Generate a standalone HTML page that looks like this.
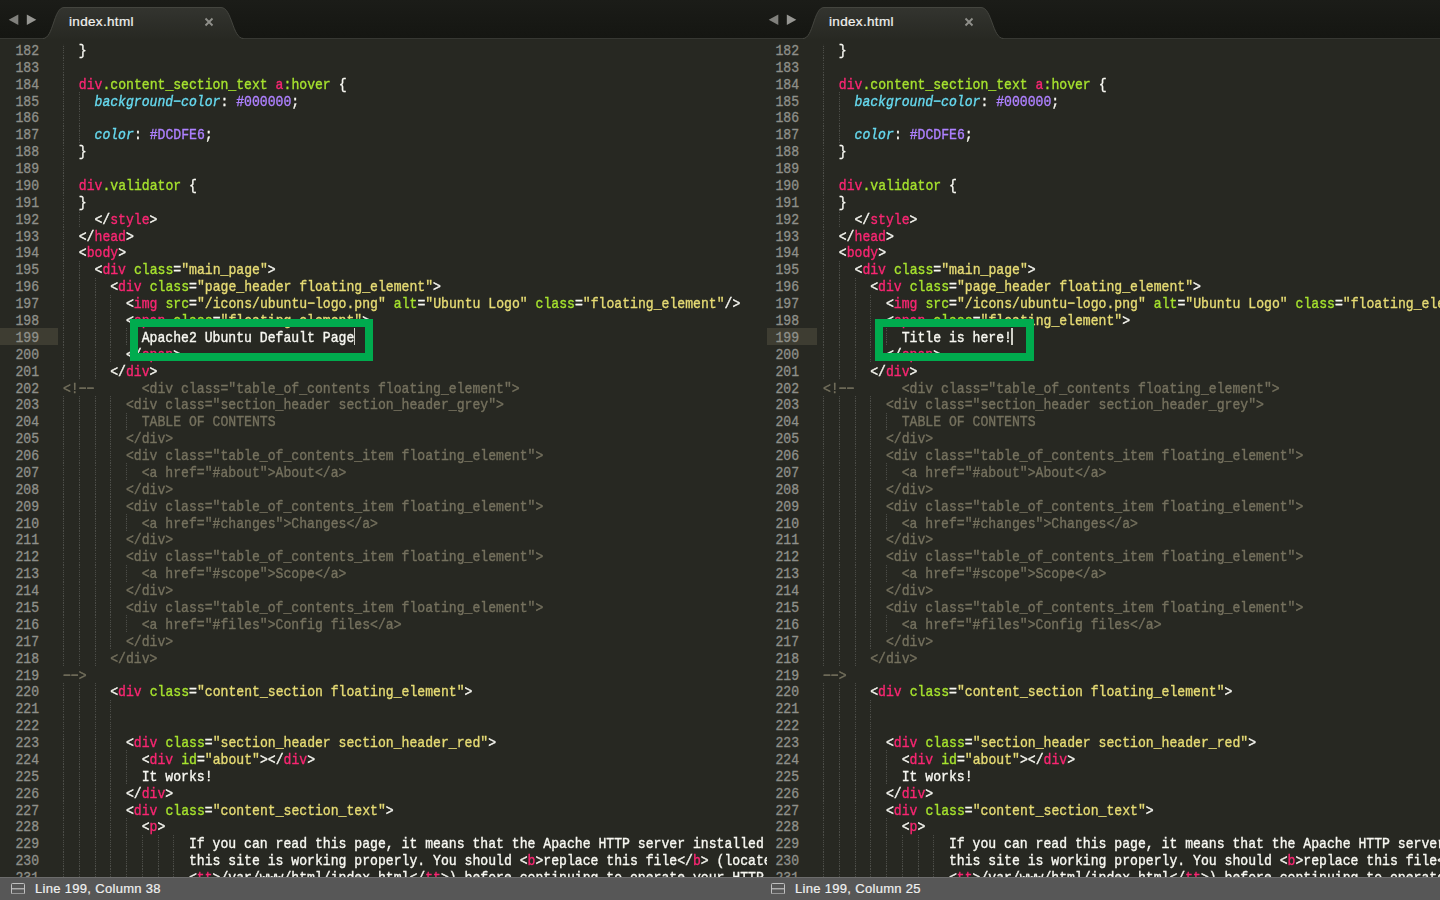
<!DOCTYPE html>
<html><head><meta charset="utf-8"><title>index.html</title>
<style>

*{box-sizing:border-box;margin:0;padding:0}
html,body{width:1440px;height:900px;overflow:hidden;background:#272822}
body{position:relative;font-family:"Liberation Mono",monospace;color:#f8f8f2}
.pane{position:absolute;top:0;height:877px;overflow:hidden;background:#272822}
.guthl{position:absolute;background:#3e3d32}
.gd{position:absolute;width:1px;height:16.883px;background:repeating-linear-gradient(to bottom,rgba(255,255,255,.17) 0 1.1px,rgba(255,255,255,.02) 1.1px 2.25px)}
.gw{position:absolute;left:0;top:44px;width:100%;height:833px;overflow:hidden}
.nums{position:absolute;top:0;width:39.0px;transform-origin:100% 0}
.ln{position:absolute;right:0;height:16.883px;line-height:16.883px;font-size:15.00px;color:#8f908a;white-space:pre;-webkit-text-stroke:.32px currentColor;transform:scaleX(0.8747);transform-origin:100% 0}
.code{position:absolute;top:0;width:2000px;transform:scaleX(0.8747);transform-origin:0 0}
.l{position:absolute;left:0;height:16.883px;line-height:16.883px;font-size:15.00px;white-space:pre;color:#f8f8f2;-webkit-text-stroke:.38px currentColor}
.p{color:#f92672}.g{color:#a6e22e}.y{color:#e6db74}.b{color:#66d9ef;font-style:italic}.v{color:#ae81ff}.c{color:#75715e}
.box{position:absolute;border:8px solid #00ab4e}
.caret{position:absolute;width:1.4px;background:#d0d0c8}
#tabs{position:absolute;left:0;top:0;width:1440px;height:40px}
.tabtxt{position:absolute;top:13px;font:13.5px/18px "Liberation Sans",sans-serif;color:#f2f2f0;letter-spacing:.33px;-webkit-text-stroke:.2px currentColor}
#status{position:absolute;left:0;top:877px;width:1440px;height:23px;background:#575757;border-top:1px solid #6c6c6c}
.sttxt{position:absolute;top:2.6px;font:13px/16px "Liberation Sans",sans-serif;color:#f0f0f0;letter-spacing:.31px;-webkit-text-stroke:.2px currentColor}
.sticon{position:absolute;top:5px;width:14px;height:11.4px}

</style></head><body>
<div class="pane" style="left:0px;width:767px">
<div class="guthl" style="left:0.0px;width:57.5px;top:328.31px;height:16.88px"></div>
<div class="gw">
<i class="gd" style="left:63.05px;top:-2.70px"></i>
<i class="gd" style="left:63.05px;top:14.18px"></i>
<i class="gd" style="left:63.05px;top:31.07px"></i>
<i class="gd" style="left:63.05px;top:47.95px"></i>
<i class="gd" style="left:78.79px;top:47.95px"></i>
<i class="gd" style="left:63.05px;top:64.83px"></i>
<i class="gd" style="left:78.79px;top:64.83px"></i>
<i class="gd" style="left:63.05px;top:81.71px"></i>
<i class="gd" style="left:78.79px;top:81.71px"></i>
<i class="gd" style="left:63.05px;top:98.60px"></i>
<i class="gd" style="left:63.05px;top:115.48px"></i>
<i class="gd" style="left:63.05px;top:132.36px"></i>
<i class="gd" style="left:63.05px;top:149.25px"></i>
<i class="gd" style="left:63.05px;top:166.13px"></i>
<i class="gd" style="left:78.79px;top:166.13px"></i>
<i class="gd" style="left:63.05px;top:183.01px"></i>
<i class="gd" style="left:63.05px;top:199.90px"></i>
<i class="gd" style="left:63.05px;top:216.78px"></i>
<i class="gd" style="left:78.79px;top:216.78px"></i>
<i class="gd" style="left:63.05px;top:233.66px"></i>
<i class="gd" style="left:78.79px;top:233.66px"></i>
<i class="gd" style="left:94.54px;top:233.66px"></i>
<i class="gd" style="left:63.05px;top:250.54px"></i>
<i class="gd" style="left:78.79px;top:250.54px"></i>
<i class="gd" style="left:94.54px;top:250.54px"></i>
<i class="gd" style="left:110.28px;top:250.54px"></i>
<i class="gd" style="left:63.05px;top:267.43px"></i>
<i class="gd" style="left:78.79px;top:267.43px"></i>
<i class="gd" style="left:94.54px;top:267.43px"></i>
<i class="gd" style="left:110.28px;top:267.43px"></i>
<i class="gd" style="left:63.05px;top:284.31px"></i>
<i class="gd" style="left:78.79px;top:284.31px"></i>
<i class="gd" style="left:94.54px;top:284.31px"></i>
<i class="gd" style="left:110.28px;top:284.31px"></i>
<i class="gd" style="left:126.03px;top:284.31px"></i>
<i class="gd" style="left:63.05px;top:301.19px"></i>
<i class="gd" style="left:78.79px;top:301.19px"></i>
<i class="gd" style="left:94.54px;top:301.19px"></i>
<i class="gd" style="left:110.28px;top:301.19px"></i>
<i class="gd" style="left:63.05px;top:318.08px"></i>
<i class="gd" style="left:78.79px;top:318.08px"></i>
<i class="gd" style="left:94.54px;top:318.08px"></i>
<i class="gd" style="left:63.05px;top:351.84px"></i>
<i class="gd" style="left:78.79px;top:351.84px"></i>
<i class="gd" style="left:94.54px;top:351.84px"></i>
<i class="gd" style="left:110.28px;top:351.84px"></i>
<i class="gd" style="left:63.05px;top:368.73px"></i>
<i class="gd" style="left:78.79px;top:368.73px"></i>
<i class="gd" style="left:94.54px;top:368.73px"></i>
<i class="gd" style="left:110.28px;top:368.73px"></i>
<i class="gd" style="left:126.03px;top:368.73px"></i>
<i class="gd" style="left:63.05px;top:385.61px"></i>
<i class="gd" style="left:78.79px;top:385.61px"></i>
<i class="gd" style="left:94.54px;top:385.61px"></i>
<i class="gd" style="left:110.28px;top:385.61px"></i>
<i class="gd" style="left:63.05px;top:402.49px"></i>
<i class="gd" style="left:78.79px;top:402.49px"></i>
<i class="gd" style="left:94.54px;top:402.49px"></i>
<i class="gd" style="left:110.28px;top:402.49px"></i>
<i class="gd" style="left:63.05px;top:419.38px"></i>
<i class="gd" style="left:78.79px;top:419.38px"></i>
<i class="gd" style="left:94.54px;top:419.38px"></i>
<i class="gd" style="left:110.28px;top:419.38px"></i>
<i class="gd" style="left:126.03px;top:419.38px"></i>
<i class="gd" style="left:63.05px;top:436.26px"></i>
<i class="gd" style="left:78.79px;top:436.26px"></i>
<i class="gd" style="left:94.54px;top:436.26px"></i>
<i class="gd" style="left:110.28px;top:436.26px"></i>
<i class="gd" style="left:63.05px;top:453.14px"></i>
<i class="gd" style="left:78.79px;top:453.14px"></i>
<i class="gd" style="left:94.54px;top:453.14px"></i>
<i class="gd" style="left:110.28px;top:453.14px"></i>
<i class="gd" style="left:63.05px;top:470.02px"></i>
<i class="gd" style="left:78.79px;top:470.02px"></i>
<i class="gd" style="left:94.54px;top:470.02px"></i>
<i class="gd" style="left:110.28px;top:470.02px"></i>
<i class="gd" style="left:126.03px;top:470.02px"></i>
<i class="gd" style="left:63.05px;top:486.91px"></i>
<i class="gd" style="left:78.79px;top:486.91px"></i>
<i class="gd" style="left:94.54px;top:486.91px"></i>
<i class="gd" style="left:110.28px;top:486.91px"></i>
<i class="gd" style="left:63.05px;top:503.79px"></i>
<i class="gd" style="left:78.79px;top:503.79px"></i>
<i class="gd" style="left:94.54px;top:503.79px"></i>
<i class="gd" style="left:110.28px;top:503.79px"></i>
<i class="gd" style="left:63.05px;top:520.67px"></i>
<i class="gd" style="left:78.79px;top:520.67px"></i>
<i class="gd" style="left:94.54px;top:520.67px"></i>
<i class="gd" style="left:110.28px;top:520.67px"></i>
<i class="gd" style="left:126.03px;top:520.67px"></i>
<i class="gd" style="left:63.05px;top:537.56px"></i>
<i class="gd" style="left:78.79px;top:537.56px"></i>
<i class="gd" style="left:94.54px;top:537.56px"></i>
<i class="gd" style="left:110.28px;top:537.56px"></i>
<i class="gd" style="left:63.05px;top:554.44px"></i>
<i class="gd" style="left:78.79px;top:554.44px"></i>
<i class="gd" style="left:94.54px;top:554.44px"></i>
<i class="gd" style="left:110.28px;top:554.44px"></i>
<i class="gd" style="left:63.05px;top:571.32px"></i>
<i class="gd" style="left:78.79px;top:571.32px"></i>
<i class="gd" style="left:94.54px;top:571.32px"></i>
<i class="gd" style="left:110.28px;top:571.32px"></i>
<i class="gd" style="left:126.03px;top:571.32px"></i>
<i class="gd" style="left:63.05px;top:588.20px"></i>
<i class="gd" style="left:78.79px;top:588.20px"></i>
<i class="gd" style="left:94.54px;top:588.20px"></i>
<i class="gd" style="left:110.28px;top:588.20px"></i>
<i class="gd" style="left:63.05px;top:605.09px"></i>
<i class="gd" style="left:78.79px;top:605.09px"></i>
<i class="gd" style="left:94.54px;top:605.09px"></i>
<i class="gd" style="left:63.05px;top:638.85px"></i>
<i class="gd" style="left:78.79px;top:638.85px"></i>
<i class="gd" style="left:94.54px;top:638.85px"></i>
<i class="gd" style="left:63.05px;top:655.74px"></i>
<i class="gd" style="left:78.79px;top:655.74px"></i>
<i class="gd" style="left:94.54px;top:655.74px"></i>
<i class="gd" style="left:110.28px;top:655.74px"></i>
<i class="gd" style="left:63.05px;top:672.62px"></i>
<i class="gd" style="left:78.79px;top:672.62px"></i>
<i class="gd" style="left:94.54px;top:672.62px"></i>
<i class="gd" style="left:110.28px;top:672.62px"></i>
<i class="gd" style="left:63.05px;top:689.50px"></i>
<i class="gd" style="left:78.79px;top:689.50px"></i>
<i class="gd" style="left:94.54px;top:689.50px"></i>
<i class="gd" style="left:110.28px;top:689.50px"></i>
<i class="gd" style="left:63.05px;top:706.39px"></i>
<i class="gd" style="left:78.79px;top:706.39px"></i>
<i class="gd" style="left:94.54px;top:706.39px"></i>
<i class="gd" style="left:110.28px;top:706.39px"></i>
<i class="gd" style="left:126.03px;top:706.39px"></i>
<i class="gd" style="left:63.05px;top:723.27px"></i>
<i class="gd" style="left:78.79px;top:723.27px"></i>
<i class="gd" style="left:94.54px;top:723.27px"></i>
<i class="gd" style="left:110.28px;top:723.27px"></i>
<i class="gd" style="left:126.03px;top:723.27px"></i>
<i class="gd" style="left:63.05px;top:740.15px"></i>
<i class="gd" style="left:78.79px;top:740.15px"></i>
<i class="gd" style="left:94.54px;top:740.15px"></i>
<i class="gd" style="left:110.28px;top:740.15px"></i>
<i class="gd" style="left:63.05px;top:757.03px"></i>
<i class="gd" style="left:78.79px;top:757.03px"></i>
<i class="gd" style="left:94.54px;top:757.03px"></i>
<i class="gd" style="left:110.28px;top:757.03px"></i>
<i class="gd" style="left:63.05px;top:773.92px"></i>
<i class="gd" style="left:78.79px;top:773.92px"></i>
<i class="gd" style="left:94.54px;top:773.92px"></i>
<i class="gd" style="left:110.28px;top:773.92px"></i>
<i class="gd" style="left:126.03px;top:773.92px"></i>
<i class="gd" style="left:63.05px;top:790.80px"></i>
<i class="gd" style="left:78.79px;top:790.80px"></i>
<i class="gd" style="left:94.54px;top:790.80px"></i>
<i class="gd" style="left:110.28px;top:790.80px"></i>
<i class="gd" style="left:126.03px;top:790.80px"></i>
<i class="gd" style="left:141.77px;top:790.80px"></i>
<i class="gd" style="left:157.51px;top:790.80px"></i>
<i class="gd" style="left:173.26px;top:790.80px"></i>
<i class="gd" style="left:63.05px;top:807.68px"></i>
<i class="gd" style="left:78.79px;top:807.68px"></i>
<i class="gd" style="left:94.54px;top:807.68px"></i>
<i class="gd" style="left:110.28px;top:807.68px"></i>
<i class="gd" style="left:126.03px;top:807.68px"></i>
<i class="gd" style="left:141.77px;top:807.68px"></i>
<i class="gd" style="left:157.51px;top:807.68px"></i>
<i class="gd" style="left:173.26px;top:807.68px"></i>
<i class="gd" style="left:63.05px;top:824.57px"></i>
<i class="gd" style="left:78.79px;top:824.57px"></i>
<i class="gd" style="left:94.54px;top:824.57px"></i>
<i class="gd" style="left:110.28px;top:824.57px"></i>
<i class="gd" style="left:126.03px;top:824.57px"></i>
<i class="gd" style="left:141.77px;top:824.57px"></i>
<i class="gd" style="left:157.51px;top:824.57px"></i>
<i class="gd" style="left:173.26px;top:824.57px"></i>
</div>
<div class="nums" style="left:0.00px">
<div class="ln" style="top:43.85px">182</div>
<div class="ln" style="top:60.73px">183</div>
<div class="ln" style="top:77.62px">184</div>
<div class="ln" style="top:94.50px">185</div>
<div class="ln" style="top:111.38px">186</div>
<div class="ln" style="top:128.26px">187</div>
<div class="ln" style="top:145.15px">188</div>
<div class="ln" style="top:162.03px">189</div>
<div class="ln" style="top:178.91px">190</div>
<div class="ln" style="top:195.80px">191</div>
<div class="ln" style="top:212.68px">192</div>
<div class="ln" style="top:229.56px">193</div>
<div class="ln" style="top:246.45px">194</div>
<div class="ln" style="top:263.33px">195</div>
<div class="ln" style="top:280.21px">196</div>
<div class="ln" style="top:297.09px">197</div>
<div class="ln" style="top:313.98px">198</div>
<div class="ln" style="top:330.86px">199</div>
<div class="ln" style="top:347.74px">200</div>
<div class="ln" style="top:364.63px">201</div>
<div class="ln" style="top:381.51px">202</div>
<div class="ln" style="top:398.39px">203</div>
<div class="ln" style="top:415.28px">204</div>
<div class="ln" style="top:432.16px">205</div>
<div class="ln" style="top:449.04px">206</div>
<div class="ln" style="top:465.93px">207</div>
<div class="ln" style="top:482.81px">208</div>
<div class="ln" style="top:499.69px">209</div>
<div class="ln" style="top:516.57px">210</div>
<div class="ln" style="top:533.46px">211</div>
<div class="ln" style="top:550.34px">212</div>
<div class="ln" style="top:567.22px">213</div>
<div class="ln" style="top:584.11px">214</div>
<div class="ln" style="top:600.99px">215</div>
<div class="ln" style="top:617.87px">216</div>
<div class="ln" style="top:634.75px">217</div>
<div class="ln" style="top:651.64px">218</div>
<div class="ln" style="top:668.52px">219</div>
<div class="ln" style="top:685.40px">220</div>
<div class="ln" style="top:702.29px">221</div>
<div class="ln" style="top:719.17px">222</div>
<div class="ln" style="top:736.05px">223</div>
<div class="ln" style="top:752.94px">224</div>
<div class="ln" style="top:769.82px">225</div>
<div class="ln" style="top:786.70px">226</div>
<div class="ln" style="top:803.58px">227</div>
<div class="ln" style="top:820.47px">228</div>
<div class="ln" style="top:837.35px">229</div>
<div class="ln" style="top:854.23px">230</div>
<div class="ln" style="top:871.12px">231</div>
</div>
<div class="code" style="left:63.00px">
<div class="l" style="top:43.85px">  }</div>
<div class="l" style="top:60.73px"></div>
<div class="l" style="top:77.62px">  <span class="p">div</span><span class="g">.content_section_text</span> <span class="p">a</span><span class="g">:hover</span> {</div>
<div class="l" style="top:94.50px">    <span class="b">background−color</span>: <span class="v">#000000</span>;</div>
<div class="l" style="top:111.38px"></div>
<div class="l" style="top:128.26px">    <span class="b">color</span>: <span class="v">#DCDFE6</span>;</div>
<div class="l" style="top:145.15px">  }</div>
<div class="l" style="top:162.03px"></div>
<div class="l" style="top:178.91px">  <span class="p">div</span><span class="g">.validator</span> {</div>
<div class="l" style="top:195.80px">  }</div>
<div class="l" style="top:212.68px">    &lt;/<span class="p">style</span>&gt;</div>
<div class="l" style="top:229.56px">  &lt;/<span class="p">head</span>&gt;</div>
<div class="l" style="top:246.45px">  &lt;<span class="p">body</span>&gt;</div>
<div class="l" style="top:263.33px">    &lt;<span class="p">div</span> <span class="g">class</span>=<span class="y">"main_page"</span>&gt;</div>
<div class="l" style="top:280.21px">      &lt;<span class="p">div</span> <span class="g">class</span>=<span class="y">"page_header floating_element"</span>&gt;</div>
<div class="l" style="top:297.09px">        &lt;<span class="p">img</span> <span class="g">src</span>=<span class="y">"/icons/ubuntu−logo.png"</span> <span class="g">alt</span>=<span class="y">"Ubuntu Logo"</span> <span class="g">class</span>=<span class="y">"floating_element"</span>/&gt;</div>
<div class="l" style="top:313.98px">        &lt;<span class="p">span</span> <span class="g">class</span>=<span class="y">"floating_element"</span>&gt;</div>
<div class="l" style="top:330.86px">          Apache2 Ubuntu Default Page</div>
<div class="l" style="top:347.74px">        &lt;/<span class="p">span</span>&gt;</div>
<div class="l" style="top:364.63px">      &lt;/<span class="p">div</span>&gt;</div>
<div class="l" style="top:381.51px"><span class="c">&lt;!−−      &lt;div class="table_of_contents floating_element"&gt;</span></div>
<div class="l" style="top:398.39px"><span class="c">        &lt;div class="section_header section_header_grey"&gt;</span></div>
<div class="l" style="top:415.28px"><span class="c">          TABLE OF CONTENTS</span></div>
<div class="l" style="top:432.16px"><span class="c">        &lt;/div&gt;</span></div>
<div class="l" style="top:449.04px"><span class="c">        &lt;div class="table_of_contents_item floating_element"&gt;</span></div>
<div class="l" style="top:465.93px"><span class="c">          &lt;a href="#about"&gt;About&lt;/a&gt;</span></div>
<div class="l" style="top:482.81px"><span class="c">        &lt;/div&gt;</span></div>
<div class="l" style="top:499.69px"><span class="c">        &lt;div class="table_of_contents_item floating_element"&gt;</span></div>
<div class="l" style="top:516.57px"><span class="c">          &lt;a href="#changes"&gt;Changes&lt;/a&gt;</span></div>
<div class="l" style="top:533.46px"><span class="c">        &lt;/div&gt;</span></div>
<div class="l" style="top:550.34px"><span class="c">        &lt;div class="table_of_contents_item floating_element"&gt;</span></div>
<div class="l" style="top:567.22px"><span class="c">          &lt;a href="#scope"&gt;Scope&lt;/a&gt;</span></div>
<div class="l" style="top:584.11px"><span class="c">        &lt;/div&gt;</span></div>
<div class="l" style="top:600.99px"><span class="c">        &lt;div class="table_of_contents_item floating_element"&gt;</span></div>
<div class="l" style="top:617.87px"><span class="c">          &lt;a href="#files"&gt;Config files&lt;/a&gt;</span></div>
<div class="l" style="top:634.75px"><span class="c">        &lt;/div&gt;</span></div>
<div class="l" style="top:651.64px"><span class="c">      &lt;/div&gt;</span></div>
<div class="l" style="top:668.52px"><span class="c">−−&gt;</span></div>
<div class="l" style="top:685.40px">      &lt;<span class="p">div</span> <span class="g">class</span>=<span class="y">"content_section floating_element"</span>&gt;</div>
<div class="l" style="top:702.29px"></div>
<div class="l" style="top:719.17px"></div>
<div class="l" style="top:736.05px">        &lt;<span class="p">div</span> <span class="g">class</span>=<span class="y">"section_header section_header_red"</span>&gt;</div>
<div class="l" style="top:752.94px">          &lt;<span class="p">div</span> <span class="g">id</span>=<span class="y">"about"</span>&gt;&lt;/<span class="p">div</span>&gt;</div>
<div class="l" style="top:769.82px">          It works!</div>
<div class="l" style="top:786.70px">        &lt;/<span class="p">div</span>&gt;</div>
<div class="l" style="top:803.58px">        &lt;<span class="p">div</span> <span class="g">class</span>=<span class="y">"content_section_text"</span>&gt;</div>
<div class="l" style="top:820.47px">          &lt;<span class="p">p</span>&gt;</div>
<div class="l" style="top:837.35px">                If you can read this page, it means that the Apache HTTP server installed at</div>
<div class="l" style="top:854.23px">                this site is working properly. You should &lt;<span class="p">b</span>&gt;replace this file&lt;/<span class="p">b</span>&gt; (located at</div>
<div class="l" style="top:871.12px">                &lt;<span class="p">tt</span>&gt;/var/www/html/index.html&lt;/<span class="p">tt</span>&gt;) before continuing to operate your HTTP server.</div>
</div>
<div class="box" style="left:130.0px;top:319px;width:243.0px;height:41.5px"></div>
<div class="caret" style="left:353.56px;top:328.01px;height:17.48px"></div>
</div>
<div class="pane" style="left:767px;width:673px">
<div class="guthl" style="left:0.0px;width:49.7px;top:328.31px;height:16.88px"></div>
<div class="gw">
<i class="gd" style="left:56.05px;top:-2.70px"></i>
<i class="gd" style="left:56.05px;top:14.18px"></i>
<i class="gd" style="left:56.05px;top:31.07px"></i>
<i class="gd" style="left:56.05px;top:47.95px"></i>
<i class="gd" style="left:71.79px;top:47.95px"></i>
<i class="gd" style="left:56.05px;top:64.83px"></i>
<i class="gd" style="left:71.79px;top:64.83px"></i>
<i class="gd" style="left:56.05px;top:81.71px"></i>
<i class="gd" style="left:71.79px;top:81.71px"></i>
<i class="gd" style="left:56.05px;top:98.60px"></i>
<i class="gd" style="left:56.05px;top:115.48px"></i>
<i class="gd" style="left:56.05px;top:132.36px"></i>
<i class="gd" style="left:56.05px;top:149.25px"></i>
<i class="gd" style="left:56.05px;top:166.13px"></i>
<i class="gd" style="left:71.79px;top:166.13px"></i>
<i class="gd" style="left:56.05px;top:183.01px"></i>
<i class="gd" style="left:56.05px;top:199.90px"></i>
<i class="gd" style="left:56.05px;top:216.78px"></i>
<i class="gd" style="left:71.79px;top:216.78px"></i>
<i class="gd" style="left:56.05px;top:233.66px"></i>
<i class="gd" style="left:71.79px;top:233.66px"></i>
<i class="gd" style="left:87.54px;top:233.66px"></i>
<i class="gd" style="left:56.05px;top:250.54px"></i>
<i class="gd" style="left:71.79px;top:250.54px"></i>
<i class="gd" style="left:87.54px;top:250.54px"></i>
<i class="gd" style="left:103.28px;top:250.54px"></i>
<i class="gd" style="left:56.05px;top:267.43px"></i>
<i class="gd" style="left:71.79px;top:267.43px"></i>
<i class="gd" style="left:87.54px;top:267.43px"></i>
<i class="gd" style="left:103.28px;top:267.43px"></i>
<i class="gd" style="left:56.05px;top:284.31px"></i>
<i class="gd" style="left:71.79px;top:284.31px"></i>
<i class="gd" style="left:87.54px;top:284.31px"></i>
<i class="gd" style="left:103.28px;top:284.31px"></i>
<i class="gd" style="left:119.03px;top:284.31px"></i>
<i class="gd" style="left:56.05px;top:301.19px"></i>
<i class="gd" style="left:71.79px;top:301.19px"></i>
<i class="gd" style="left:87.54px;top:301.19px"></i>
<i class="gd" style="left:103.28px;top:301.19px"></i>
<i class="gd" style="left:56.05px;top:318.08px"></i>
<i class="gd" style="left:71.79px;top:318.08px"></i>
<i class="gd" style="left:87.54px;top:318.08px"></i>
<i class="gd" style="left:56.05px;top:351.84px"></i>
<i class="gd" style="left:71.79px;top:351.84px"></i>
<i class="gd" style="left:87.54px;top:351.84px"></i>
<i class="gd" style="left:103.28px;top:351.84px"></i>
<i class="gd" style="left:56.05px;top:368.73px"></i>
<i class="gd" style="left:71.79px;top:368.73px"></i>
<i class="gd" style="left:87.54px;top:368.73px"></i>
<i class="gd" style="left:103.28px;top:368.73px"></i>
<i class="gd" style="left:119.03px;top:368.73px"></i>
<i class="gd" style="left:56.05px;top:385.61px"></i>
<i class="gd" style="left:71.79px;top:385.61px"></i>
<i class="gd" style="left:87.54px;top:385.61px"></i>
<i class="gd" style="left:103.28px;top:385.61px"></i>
<i class="gd" style="left:56.05px;top:402.49px"></i>
<i class="gd" style="left:71.79px;top:402.49px"></i>
<i class="gd" style="left:87.54px;top:402.49px"></i>
<i class="gd" style="left:103.28px;top:402.49px"></i>
<i class="gd" style="left:56.05px;top:419.38px"></i>
<i class="gd" style="left:71.79px;top:419.38px"></i>
<i class="gd" style="left:87.54px;top:419.38px"></i>
<i class="gd" style="left:103.28px;top:419.38px"></i>
<i class="gd" style="left:119.03px;top:419.38px"></i>
<i class="gd" style="left:56.05px;top:436.26px"></i>
<i class="gd" style="left:71.79px;top:436.26px"></i>
<i class="gd" style="left:87.54px;top:436.26px"></i>
<i class="gd" style="left:103.28px;top:436.26px"></i>
<i class="gd" style="left:56.05px;top:453.14px"></i>
<i class="gd" style="left:71.79px;top:453.14px"></i>
<i class="gd" style="left:87.54px;top:453.14px"></i>
<i class="gd" style="left:103.28px;top:453.14px"></i>
<i class="gd" style="left:56.05px;top:470.02px"></i>
<i class="gd" style="left:71.79px;top:470.02px"></i>
<i class="gd" style="left:87.54px;top:470.02px"></i>
<i class="gd" style="left:103.28px;top:470.02px"></i>
<i class="gd" style="left:119.03px;top:470.02px"></i>
<i class="gd" style="left:56.05px;top:486.91px"></i>
<i class="gd" style="left:71.79px;top:486.91px"></i>
<i class="gd" style="left:87.54px;top:486.91px"></i>
<i class="gd" style="left:103.28px;top:486.91px"></i>
<i class="gd" style="left:56.05px;top:503.79px"></i>
<i class="gd" style="left:71.79px;top:503.79px"></i>
<i class="gd" style="left:87.54px;top:503.79px"></i>
<i class="gd" style="left:103.28px;top:503.79px"></i>
<i class="gd" style="left:56.05px;top:520.67px"></i>
<i class="gd" style="left:71.79px;top:520.67px"></i>
<i class="gd" style="left:87.54px;top:520.67px"></i>
<i class="gd" style="left:103.28px;top:520.67px"></i>
<i class="gd" style="left:119.03px;top:520.67px"></i>
<i class="gd" style="left:56.05px;top:537.56px"></i>
<i class="gd" style="left:71.79px;top:537.56px"></i>
<i class="gd" style="left:87.54px;top:537.56px"></i>
<i class="gd" style="left:103.28px;top:537.56px"></i>
<i class="gd" style="left:56.05px;top:554.44px"></i>
<i class="gd" style="left:71.79px;top:554.44px"></i>
<i class="gd" style="left:87.54px;top:554.44px"></i>
<i class="gd" style="left:103.28px;top:554.44px"></i>
<i class="gd" style="left:56.05px;top:571.32px"></i>
<i class="gd" style="left:71.79px;top:571.32px"></i>
<i class="gd" style="left:87.54px;top:571.32px"></i>
<i class="gd" style="left:103.28px;top:571.32px"></i>
<i class="gd" style="left:119.03px;top:571.32px"></i>
<i class="gd" style="left:56.05px;top:588.20px"></i>
<i class="gd" style="left:71.79px;top:588.20px"></i>
<i class="gd" style="left:87.54px;top:588.20px"></i>
<i class="gd" style="left:103.28px;top:588.20px"></i>
<i class="gd" style="left:56.05px;top:605.09px"></i>
<i class="gd" style="left:71.79px;top:605.09px"></i>
<i class="gd" style="left:87.54px;top:605.09px"></i>
<i class="gd" style="left:56.05px;top:638.85px"></i>
<i class="gd" style="left:71.79px;top:638.85px"></i>
<i class="gd" style="left:87.54px;top:638.85px"></i>
<i class="gd" style="left:56.05px;top:655.74px"></i>
<i class="gd" style="left:71.79px;top:655.74px"></i>
<i class="gd" style="left:87.54px;top:655.74px"></i>
<i class="gd" style="left:103.28px;top:655.74px"></i>
<i class="gd" style="left:56.05px;top:672.62px"></i>
<i class="gd" style="left:71.79px;top:672.62px"></i>
<i class="gd" style="left:87.54px;top:672.62px"></i>
<i class="gd" style="left:103.28px;top:672.62px"></i>
<i class="gd" style="left:56.05px;top:689.50px"></i>
<i class="gd" style="left:71.79px;top:689.50px"></i>
<i class="gd" style="left:87.54px;top:689.50px"></i>
<i class="gd" style="left:103.28px;top:689.50px"></i>
<i class="gd" style="left:56.05px;top:706.39px"></i>
<i class="gd" style="left:71.79px;top:706.39px"></i>
<i class="gd" style="left:87.54px;top:706.39px"></i>
<i class="gd" style="left:103.28px;top:706.39px"></i>
<i class="gd" style="left:119.03px;top:706.39px"></i>
<i class="gd" style="left:56.05px;top:723.27px"></i>
<i class="gd" style="left:71.79px;top:723.27px"></i>
<i class="gd" style="left:87.54px;top:723.27px"></i>
<i class="gd" style="left:103.28px;top:723.27px"></i>
<i class="gd" style="left:119.03px;top:723.27px"></i>
<i class="gd" style="left:56.05px;top:740.15px"></i>
<i class="gd" style="left:71.79px;top:740.15px"></i>
<i class="gd" style="left:87.54px;top:740.15px"></i>
<i class="gd" style="left:103.28px;top:740.15px"></i>
<i class="gd" style="left:56.05px;top:757.03px"></i>
<i class="gd" style="left:71.79px;top:757.03px"></i>
<i class="gd" style="left:87.54px;top:757.03px"></i>
<i class="gd" style="left:103.28px;top:757.03px"></i>
<i class="gd" style="left:56.05px;top:773.92px"></i>
<i class="gd" style="left:71.79px;top:773.92px"></i>
<i class="gd" style="left:87.54px;top:773.92px"></i>
<i class="gd" style="left:103.28px;top:773.92px"></i>
<i class="gd" style="left:119.03px;top:773.92px"></i>
<i class="gd" style="left:56.05px;top:790.80px"></i>
<i class="gd" style="left:71.79px;top:790.80px"></i>
<i class="gd" style="left:87.54px;top:790.80px"></i>
<i class="gd" style="left:103.28px;top:790.80px"></i>
<i class="gd" style="left:119.03px;top:790.80px"></i>
<i class="gd" style="left:134.77px;top:790.80px"></i>
<i class="gd" style="left:150.51px;top:790.80px"></i>
<i class="gd" style="left:166.26px;top:790.80px"></i>
<i class="gd" style="left:56.05px;top:807.68px"></i>
<i class="gd" style="left:71.79px;top:807.68px"></i>
<i class="gd" style="left:87.54px;top:807.68px"></i>
<i class="gd" style="left:103.28px;top:807.68px"></i>
<i class="gd" style="left:119.03px;top:807.68px"></i>
<i class="gd" style="left:134.77px;top:807.68px"></i>
<i class="gd" style="left:150.51px;top:807.68px"></i>
<i class="gd" style="left:166.26px;top:807.68px"></i>
<i class="gd" style="left:56.05px;top:824.57px"></i>
<i class="gd" style="left:71.79px;top:824.57px"></i>
<i class="gd" style="left:87.54px;top:824.57px"></i>
<i class="gd" style="left:103.28px;top:824.57px"></i>
<i class="gd" style="left:119.03px;top:824.57px"></i>
<i class="gd" style="left:134.77px;top:824.57px"></i>
<i class="gd" style="left:150.51px;top:824.57px"></i>
<i class="gd" style="left:166.26px;top:824.57px"></i>
</div>
<div class="nums" style="left:-7.00px">
<div class="ln" style="top:43.85px">182</div>
<div class="ln" style="top:60.73px">183</div>
<div class="ln" style="top:77.62px">184</div>
<div class="ln" style="top:94.50px">185</div>
<div class="ln" style="top:111.38px">186</div>
<div class="ln" style="top:128.26px">187</div>
<div class="ln" style="top:145.15px">188</div>
<div class="ln" style="top:162.03px">189</div>
<div class="ln" style="top:178.91px">190</div>
<div class="ln" style="top:195.80px">191</div>
<div class="ln" style="top:212.68px">192</div>
<div class="ln" style="top:229.56px">193</div>
<div class="ln" style="top:246.45px">194</div>
<div class="ln" style="top:263.33px">195</div>
<div class="ln" style="top:280.21px">196</div>
<div class="ln" style="top:297.09px">197</div>
<div class="ln" style="top:313.98px">198</div>
<div class="ln" style="top:330.86px">199</div>
<div class="ln" style="top:347.74px">200</div>
<div class="ln" style="top:364.63px">201</div>
<div class="ln" style="top:381.51px">202</div>
<div class="ln" style="top:398.39px">203</div>
<div class="ln" style="top:415.28px">204</div>
<div class="ln" style="top:432.16px">205</div>
<div class="ln" style="top:449.04px">206</div>
<div class="ln" style="top:465.93px">207</div>
<div class="ln" style="top:482.81px">208</div>
<div class="ln" style="top:499.69px">209</div>
<div class="ln" style="top:516.57px">210</div>
<div class="ln" style="top:533.46px">211</div>
<div class="ln" style="top:550.34px">212</div>
<div class="ln" style="top:567.22px">213</div>
<div class="ln" style="top:584.11px">214</div>
<div class="ln" style="top:600.99px">215</div>
<div class="ln" style="top:617.87px">216</div>
<div class="ln" style="top:634.75px">217</div>
<div class="ln" style="top:651.64px">218</div>
<div class="ln" style="top:668.52px">219</div>
<div class="ln" style="top:685.40px">220</div>
<div class="ln" style="top:702.29px">221</div>
<div class="ln" style="top:719.17px">222</div>
<div class="ln" style="top:736.05px">223</div>
<div class="ln" style="top:752.94px">224</div>
<div class="ln" style="top:769.82px">225</div>
<div class="ln" style="top:786.70px">226</div>
<div class="ln" style="top:803.58px">227</div>
<div class="ln" style="top:820.47px">228</div>
<div class="ln" style="top:837.35px">229</div>
<div class="ln" style="top:854.23px">230</div>
<div class="ln" style="top:871.12px">231</div>
</div>
<div class="code" style="left:56.00px">
<div class="l" style="top:43.85px">  }</div>
<div class="l" style="top:60.73px"></div>
<div class="l" style="top:77.62px">  <span class="p">div</span><span class="g">.content_section_text</span> <span class="p">a</span><span class="g">:hover</span> {</div>
<div class="l" style="top:94.50px">    <span class="b">background−color</span>: <span class="v">#000000</span>;</div>
<div class="l" style="top:111.38px"></div>
<div class="l" style="top:128.26px">    <span class="b">color</span>: <span class="v">#DCDFE6</span>;</div>
<div class="l" style="top:145.15px">  }</div>
<div class="l" style="top:162.03px"></div>
<div class="l" style="top:178.91px">  <span class="p">div</span><span class="g">.validator</span> {</div>
<div class="l" style="top:195.80px">  }</div>
<div class="l" style="top:212.68px">    &lt;/<span class="p">style</span>&gt;</div>
<div class="l" style="top:229.56px">  &lt;/<span class="p">head</span>&gt;</div>
<div class="l" style="top:246.45px">  &lt;<span class="p">body</span>&gt;</div>
<div class="l" style="top:263.33px">    &lt;<span class="p">div</span> <span class="g">class</span>=<span class="y">"main_page"</span>&gt;</div>
<div class="l" style="top:280.21px">      &lt;<span class="p">div</span> <span class="g">class</span>=<span class="y">"page_header floating_element"</span>&gt;</div>
<div class="l" style="top:297.09px">        &lt;<span class="p">img</span> <span class="g">src</span>=<span class="y">"/icons/ubuntu−logo.png"</span> <span class="g">alt</span>=<span class="y">"Ubuntu Logo"</span> <span class="g">class</span>=<span class="y">"floating_element"</span>/&gt;</div>
<div class="l" style="top:313.98px">        &lt;<span class="p">span</span> <span class="g">class</span>=<span class="y">"floating_element"</span>&gt;</div>
<div class="l" style="top:330.86px">          Title is here!</div>
<div class="l" style="top:347.74px">        &lt;/<span class="p">span</span>&gt;</div>
<div class="l" style="top:364.63px">      &lt;/<span class="p">div</span>&gt;</div>
<div class="l" style="top:381.51px"><span class="c">&lt;!−−      &lt;div class="table_of_contents floating_element"&gt;</span></div>
<div class="l" style="top:398.39px"><span class="c">        &lt;div class="section_header section_header_grey"&gt;</span></div>
<div class="l" style="top:415.28px"><span class="c">          TABLE OF CONTENTS</span></div>
<div class="l" style="top:432.16px"><span class="c">        &lt;/div&gt;</span></div>
<div class="l" style="top:449.04px"><span class="c">        &lt;div class="table_of_contents_item floating_element"&gt;</span></div>
<div class="l" style="top:465.93px"><span class="c">          &lt;a href="#about"&gt;About&lt;/a&gt;</span></div>
<div class="l" style="top:482.81px"><span class="c">        &lt;/div&gt;</span></div>
<div class="l" style="top:499.69px"><span class="c">        &lt;div class="table_of_contents_item floating_element"&gt;</span></div>
<div class="l" style="top:516.57px"><span class="c">          &lt;a href="#changes"&gt;Changes&lt;/a&gt;</span></div>
<div class="l" style="top:533.46px"><span class="c">        &lt;/div&gt;</span></div>
<div class="l" style="top:550.34px"><span class="c">        &lt;div class="table_of_contents_item floating_element"&gt;</span></div>
<div class="l" style="top:567.22px"><span class="c">          &lt;a href="#scope"&gt;Scope&lt;/a&gt;</span></div>
<div class="l" style="top:584.11px"><span class="c">        &lt;/div&gt;</span></div>
<div class="l" style="top:600.99px"><span class="c">        &lt;div class="table_of_contents_item floating_element"&gt;</span></div>
<div class="l" style="top:617.87px"><span class="c">          &lt;a href="#files"&gt;Config files&lt;/a&gt;</span></div>
<div class="l" style="top:634.75px"><span class="c">        &lt;/div&gt;</span></div>
<div class="l" style="top:651.64px"><span class="c">      &lt;/div&gt;</span></div>
<div class="l" style="top:668.52px"><span class="c">−−&gt;</span></div>
<div class="l" style="top:685.40px">      &lt;<span class="p">div</span> <span class="g">class</span>=<span class="y">"content_section floating_element"</span>&gt;</div>
<div class="l" style="top:702.29px"></div>
<div class="l" style="top:719.17px"></div>
<div class="l" style="top:736.05px">        &lt;<span class="p">div</span> <span class="g">class</span>=<span class="y">"section_header section_header_red"</span>&gt;</div>
<div class="l" style="top:752.94px">          &lt;<span class="p">div</span> <span class="g">id</span>=<span class="y">"about"</span>&gt;&lt;/<span class="p">div</span>&gt;</div>
<div class="l" style="top:769.82px">          It works!</div>
<div class="l" style="top:786.70px">        &lt;/<span class="p">div</span>&gt;</div>
<div class="l" style="top:803.58px">        &lt;<span class="p">div</span> <span class="g">class</span>=<span class="y">"content_section_text"</span>&gt;</div>
<div class="l" style="top:820.47px">          &lt;<span class="p">p</span>&gt;</div>
<div class="l" style="top:837.35px">                If you can read this page, it means that the Apache HTTP server installed at</div>
<div class="l" style="top:854.23px">                this site is working properly. You should &lt;<span class="p">b</span>&gt;replace this file&lt;/<span class="p">b</span>&gt; (located at</div>
<div class="l" style="top:871.12px">                &lt;<span class="p">tt</span>&gt;/var/www/html/index.html&lt;/<span class="p">tt</span>&gt;) before continuing to operate your HTTP server.</div>
</div>
<div class="box" style="left:108.0px;top:319px;width:159.0px;height:41.5px"></div>
<div class="caret" style="left:244.23px;top:328.01px;height:17.48px"></div>
</div>
<svg id="tabs" viewBox="0 0 1440 40">
<defs><linearGradient id="tg" x1="0" y1="0" x2="0" y2="1"><stop offset="0" stop-color="#33342f"/><stop offset="1" stop-color="#272822"/></linearGradient>
<linearGradient id="bg" x1="0" y1="0" x2="0" y2="1"><stop offset="0" stop-color="#1b1c18"/><stop offset="1" stop-color="#151612"/></linearGradient></defs>
<rect x="0" y="0" width="1440" height="38" fill="url(#bg)"/>
<rect x="0" y="38" width="1440" height="1" fill="#373833"/>
<rect x="0" y="39" width="1440" height="1" fill="#272822"/>
<path d="M43.0 38.5 C53.5 38.5 53.5 7.5 64.0 7.5 L221.0 7.5 C232.2 7.5 232.2 38.5 243.5 38.5 L243.5 40 L43.0 40 Z" fill="url(#tg)"/>
<path d="M43.0 38.5 C53.5 38.5 53.5 7.5 64.0 7.5 L221.0 7.5 C232.2 7.5 232.2 38.5 243.5 38.5" fill="none" stroke="#44453f" stroke-width="1"/>
<path d="M8.7 19.8 L18.3 14.6 L18.3 25 Z" fill="#80807c"/>
<path d="M36.3 19.8 L26.8 14.6 L26.8 25 Z" fill="#969692"/>
<path d="M205.5 18.5 L212.5 25.5 M212.5 18.5 L205.5 25.5" stroke="#8f8f8a" stroke-width="1.9" fill="none"/>
<path d="M803.0 38.5 C813.5 38.5 813.5 7.5 824.0 7.5 L981.0 7.5 C992.2 7.5 992.2 38.5 1003.5 38.5 L1003.5 40 L803.0 40 Z" fill="url(#tg)"/>
<path d="M803.0 38.5 C813.5 38.5 813.5 7.5 824.0 7.5 L981.0 7.5 C992.2 7.5 992.2 38.5 1003.5 38.5" fill="none" stroke="#44453f" stroke-width="1"/>
<path d="M768.7 19.8 L778.3 14.6 L778.3 25 Z" fill="#80807c"/>
<path d="M796.3 19.8 L786.8 14.6 L786.8 25 Z" fill="#969692"/>
<path d="M965.5 18.5 L972.5 25.5 M972.5 18.5 L965.5 25.5" stroke="#8f8f8a" stroke-width="1.9" fill="none"/>
</svg>
<div class="tabtxt" style="left:69.0px">index.html</div>
<div class="tabtxt" style="left:829.0px">index.html</div>
<div id="status">
<svg class="sticon" style="left:11.0px" viewBox="0 0 14 12" preserveAspectRatio="none"><rect x="0.5" y="0.5" width="13" height="11" rx="1" fill="none" stroke="#c4c4c4" stroke-width="1"/><rect x="1" y="5.5" width="12" height="1.2" fill="#c4c4c4"/></svg>
<div class="sttxt" style="left:35.0px">Line 199, Column 38</div>
<svg class="sticon" style="left:771.0px" viewBox="0 0 14 12" preserveAspectRatio="none"><rect x="0.5" y="0.5" width="13" height="11" rx="1" fill="none" stroke="#c4c4c4" stroke-width="1"/><rect x="1" y="5.5" width="12" height="1.2" fill="#c4c4c4"/></svg>
<div class="sttxt" style="left:795.0px">Line 199, Column 25</div>
</div>
</body></html>
